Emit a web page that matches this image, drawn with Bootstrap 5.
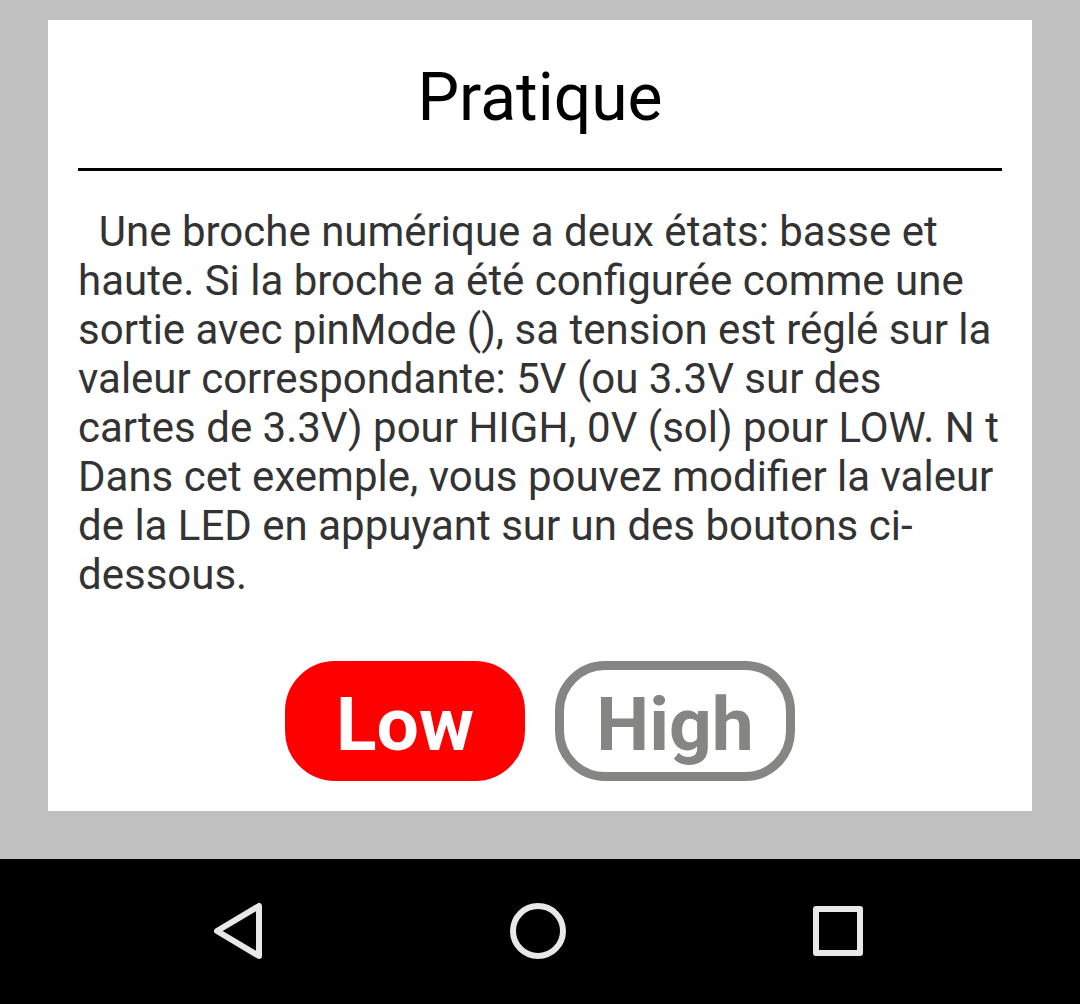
<!DOCTYPE html>
<html lang="fr">
<head>
<meta charset="utf-8">
<meta name="viewport" content="width=device-width, initial-scale=1">
<title>Pratique</title>
<link href="https://cdn.jsdelivr.net/npm/bootstrap@5.3.0/dist/css/bootstrap.min.css" rel="stylesheet">
<style>
body { background: #c0c0c0; font-family: Roboto, "Liberation Sans", sans-serif; }
.lesson { margin: 20px 48px 48px; padding: 30px; }
.lesson-title { font-size: 66px; line-height: 96px; font-weight: 400; padding-bottom: 22px; border-bottom: 3px solid #000; color: #000; }
.lesson-text { font-size: 42px; line-height: 49px; color: #333; margin: 36px 0 62px; white-space: pre-wrap; }
.level-btn { width: 240px; height: 120px; border: 9px solid #858583; border-radius: 50px; background: #fff; color: #858583; font-size: 75px; line-height: 88px; font-weight: 700; padding: 6px 0 0; }
.level-btn.is-on { background: #f00; border-color: #f00; color: #fff; }
.gap-levels { gap: 30px; }
.system-bar { background: #000; height: 145px; padding: 0 90px; }
.system-bar button { width: 300px; }
.system-bar svg { display: block; margin: 0 auto; fill: none; stroke: #e8e8e8; stroke-width: 6px; stroke-linejoin: round; }
</style>
<script src="https://cdn.jsdelivr.net/npm/bootstrap@5.3.0/dist/js/bootstrap.bundle.min.js"></script>
</head>
<body class="d-flex flex-column min-vh-100">
<main class="lesson bg-white">
<h1 class="lesson-title text-center mb-0">Pratique</h1>
<p class="lesson-text">  Une broche numérique a deux états: basse et haute. Si la broche a été configurée comme une sortie avec pinMode (), sa tension est réglé sur la valeur correspondante: 5V (ou 3.3V sur des cartes de 3.3V) pour HIGH, 0V (sol) pour LOW. N t Dans cet exemple, vous pouvez modifier la valeur de la LED en appuyant sur un des boutons ci-dessous.</p>
<div class="d-flex justify-content-center gap-levels">
<button type="button" class="level-btn is-on" aria-pressed="true">Low</button>
<button type="button" class="level-btn" aria-pressed="false">High</button>
</div>
</main>
<nav class="system-bar d-flex justify-content-center align-items-center mt-auto" aria-label="Système">
<button type="button" class="btn p-0 border-0" aria-label="Retour"><svg width="60" height="61" viewBox="0 0 60 61"><path d="M49 5V55L7 30Z"/></svg></button>
<button type="button" class="btn p-0 border-0" aria-label="Accueil"><svg width="60" height="61" viewBox="0 0 60 61"><circle cx="28" cy="30" r="25"/></svg></button>
<button type="button" class="btn p-0 border-0" aria-label="Applications récentes"><svg width="60" height="61" viewBox="0 0 60 61"><path d="M6 8H50V52H6Z"/></svg></button>
</nav>
</body>
</html>
